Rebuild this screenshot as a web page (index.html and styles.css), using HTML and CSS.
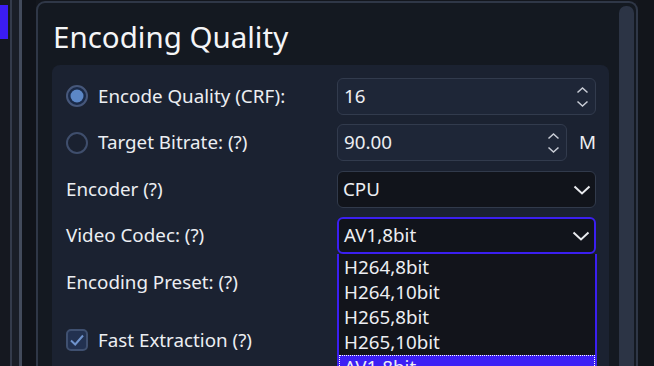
FILE: index.html
```html
<!DOCTYPE html>
<html>
<head>
<meta charset="utf-8">
<link rel="stylesheet" href="styles.css">
</head>
<body>
<div class="app">
  <div class="sidebar">
    <div class="nav"><div class="nav-indicator"></div></div>
    <div class="sep sep1"></div>
    <div class="gap gap1"></div>
    <div class="sep sep2"></div>
    <div class="gap gap2"></div>
  </div>
  <div class="panel">
    <div class="content">
      <h1 class="title">Encoding Quality</h1>
      <div class="group">
        <div class="form">
          <div class="label-cell">
            <svg class="radio" width="22" height="22" viewBox="0 0 22 22"><circle cx="11" cy="11" r="10" fill="#1a2a48" stroke="#46577a" stroke-width="2"/><circle cx="11" cy="11" r="6.5" fill="#5c87c6"/></svg>
            <span class="label">Encode Quality (CRF):</span>
          </div>
          <div class="field-cell">
            <div class="spin">
              <span class="value">16</span>
              <span class="arrows">
                <svg width="13" height="22" viewBox="0 0 13 22"><path d="M1.5 6.5 L6.5 2 L11.5 6.5" fill="none" stroke="#c9cdd6" stroke-width="1.5"/><path d="M1.5 15.5 L6.5 20 L11.5 15.5" fill="none" stroke="#c9cdd6" stroke-width="1.5"/></svg>
              </span>
            </div>
          </div>

          <div class="label-cell">
            <svg class="radio" width="22" height="22" viewBox="0 0 22 22"><circle cx="11" cy="11" r="10" fill="#1a2130" stroke="#3f4e6c" stroke-width="2"/></svg>
            <span class="label">Target Bitrate: (?)</span>
          </div>
          <div class="field-cell with-unit">
            <div class="spin spin-short">
              <span class="value">90.00</span>
              <span class="arrows">
                <svg width="13" height="22" viewBox="0 0 13 22"><path d="M1.5 6.5 L6.5 2 L11.5 6.5" fill="none" stroke="#c9cdd6" stroke-width="1.5"/><path d="M1.5 15.5 L6.5 20 L11.5 15.5" fill="none" stroke="#c9cdd6" stroke-width="1.5"/></svg>
              </span>
            </div>
            <span class="unit">M</span>
          </div>

          <div class="label-cell"><span class="label plain">Encoder (?)</span></div>
          <div class="field-cell">
            <div class="combo">
              <span class="value">CPU</span>
              <svg class="chev" width="18" height="10" viewBox="0 0 18 10"><path d="M1.5 1.5 L9 8.5 L16.5 1.5" fill="none" stroke="#e8eaee" stroke-width="2"/></svg>
            </div>
          </div>

          <div class="label-cell"><span class="label plain">Video Codec: (?)</span></div>
          <div class="field-cell popup-anchor">
            <div class="combo focused">
              <span class="value">AV1,8bit</span>
              <svg class="chev" width="18" height="10" viewBox="0 0 18 10"><path d="M1.5 1.5 L9 8.5 L16.5 1.5" fill="none" stroke="#e8eaee" stroke-width="2"/></svg>
            </div>
            <div class="popup">
              <div class="item">H264,8bit</div>
              <div class="item">H264,10bit</div>
              <div class="item">H265,8bit</div>
              <div class="item">H265,10bit</div>
              <div class="item selected">AV1,8bit</div>
            </div>
          </div>

          <div class="label-cell"><span class="label plain">Encoding Preset: (?)</span></div>
          <div class="field-cell">
            <div class="combo"></div>
          </div>

          <div class="label-cell check-row">
            <svg class="check" width="22" height="22" viewBox="0 0 22 22"><rect x="1" y="1" width="20" height="20" rx="4" fill="#223150" stroke="#3f5070" stroke-width="2"/><path d="M5 11.5 L9.2 15.5 L17 6.5" fill="none" stroke="#6f93cc" stroke-width="2"/></svg>
            <span class="label">Fast Extraction (?)</span>
          </div>
          <div class="field-cell check-row"></div>
        </div>
      </div>
    </div>
    <div class="scrollbar"><div class="thumb"></div></div>
  </div>
  <div class="right-edge"></div>
</div>
</body>
</html>
```
FILE: styles.css
```css
* { box-sizing: border-box; }
html, body {
  margin: 0;
  padding: 0;
  width: 654px;
  height: 366px;
  overflow: hidden;
  background: #13161d;
  font-family: "Noto Sans", "Open Sans", sans-serif;
  color: #eceef2;
}
.app {
  display: flex;
  height: 366px;
}
.sidebar {
  display: flex;
  flex: none;
  height: 100%;
}
.nav {
  width: 10px;
  background: #151820;
}
.nav-indicator {
  width: 8px;
  height: 34px;
  margin-top: 5px;
  background: #3b1cf3;
}
.sep1 { width: 2px; background: #343b4b; }
.gap1 { width: 7px; background: #1a1e27; }
.sep2 { width: 3px; background: #424a5b; }
.gap2 { width: 14px; background: #10131a; }

.panel {
  flex: none;
  width: 602px;
  margin-top: 1px;
  border: 2px solid #2f3747;
  border-bottom: none;
  border-radius: 9px 9px 0 0;
  background: #141921;
  display: flex;
}
.content {
  flex: 1;
  padding: 0 10px 0 14px;
  min-width: 0;
}
.title {
  margin: 15px 0 9px 1px;
  font-size: 29.5px;
  font-weight: 400;
  line-height: 38px;
  color: #f4f5f7;
  white-space: nowrap;
}
.group {
  background: #1b2231;
  border-radius: 8px 8px 0 0;
  padding: 13px 12px 0 14px;
  height: 310px;
}
.form {
  display: grid;
  grid-template-columns: 271px 259px;
  grid-auto-rows: 36px;
  row-gap: 10.5px;
}
.label-cell {
  display: flex;
  align-items: center;
}
.label {
  font-size: 18.8px;
  line-height: 25px;
  white-space: nowrap;
}
.radio, .check {
  flex: none;
  margin-right: 10px;
}
.field-cell {
  display: flex;
  align-items: center;
}
.check-row { margin-top: 23px; }

.spin {
  width: 100%;
  height: 37px;
  border: 1.5px solid #323b4d;
  border-radius: 6px;
  background: #1e2637;
  display: flex;
  align-items: center;
  justify-content: space-between;
  padding: 0 6px 0 6px;
}
.spin-short { width: 230px; flex: none; }
.value {
  font-size: 18.8px;
  line-height: 25px;
  white-space: nowrap;
}
.arrows {
  display: flex;
  align-items: center;
  margin-top: 1px;
}
.with-unit { justify-content: space-between; }
.unit {
  font-size: 18.8px;
  line-height: 25px;
}
.combo {
  position: relative;
  width: 100%;
  height: 37px;
  border: 1.5px solid #313a4b;
  border-radius: 6px;
  background: #11141b;
  display: flex;
  align-items: center;
  justify-content: space-between;
  padding: 0 4px 0 5px;
}
.combo.focused {
  border: 2px solid #3b1ff0;
}
.chev { margin-top: 1px; }

.popup-anchor { position: relative; }
.popup {
  position: absolute;
  left: 0;
  top: 36px;
  width: 260px;
  height: 130px;
  background: #12141b;
  border: 2px solid #3b1ff0;
  border-top: none;
  padding-top: 1px;
  z-index: 5;
}
.item {
  height: 25px;
  line-height: 25px;
  font-size: 18.8px;
  padding-left: 5px;
  white-space: nowrap;
}
.item.selected {
  background: #3c1ff5;
  outline: 1px dotted #ffffff;
  outline-offset: -1px;
}

.scrollbar {
  flex: none;
  width: 15px;
  margin-right: 2px;
  padding-top: 3px;
}
.thumb {
  width: 15px;
  height: 400px;
  border-radius: 7px;
  background: #2c3445;
}
.right-edge {
  flex: 1;
  background: #12151b;
}
```
